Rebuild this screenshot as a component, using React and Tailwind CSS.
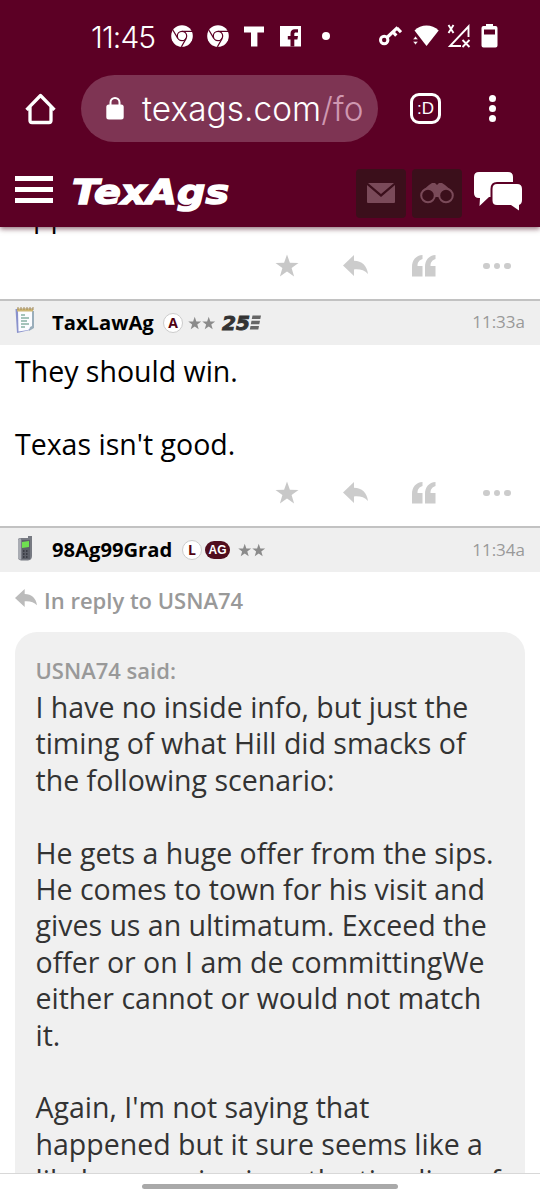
const STAR = "M12 0.5l2.9 8.2 8.6.2-6.9 5.2 2.5 8.4-7.1-4.9-7.1 4.9 2.5-8.4L.5 8.9l8.6-.2z";

function Chrome({ className }) {
  return (
    <svg className={className} width="22" height="22" viewBox="0 0 22 22">
      <circle cx="11" cy="11" r="10.8" fill="#fff" />
      <g fill="none" stroke="#5c0025" strokeWidth="1.2">
        <circle cx="11" cy="11" r="4.700" />
        <path d="M11 6.300H21M6.800 13.400L2 5.200M15.200 13.400L10.400 21.800" />
      </g>
    </svg>
  );
}

function StatusBar() {
  return (
    <div className="flex h-[72px] shrink-0 items-center pl-[91px]">
      <span className="w-[80px] whitespace-nowrap pt-[1px] font-['Inter'] text-[30px] font-light leading-none tracking-[-0.900px]">11:45</span>
      <Chrome />
      <Chrome className="ml-[14px]" />
      <svg className="ml-[15px]" width="20" height="21" viewBox="0 0 20 21" fill="#fff">
        <path d="M0 .5h20v6h-6.600v14H7v-14H0z" />
      </svg>
      <svg className="ml-[16px]" width="21" height="21" viewBox="0 0 21 21">
        <path fill="#fff" d="M0 0h21v20.500H0z" />
        <path fill="#5c0025" d="M10.500 20.500v-7H7.800V10h2.700V7.800c0-3 1.500-4.500 4.300-4.500H18v3.200h-2c-1.300 0-1.700.5-1.700 1.500v2H18l-.6 3.500h-3.100v7z" />
      </svg>
      <span className="ml-[21px] h-2 w-2 rounded-full bg-white" />
      <svg className="ml-[49px]" width="23" height="22" viewBox="0 0 23 22" fill="none" stroke="#fff">
        <circle cx="5.200" cy="15" r="3.700" strokeWidth="3" />
        <path d="M8 12.500L18.700 2.300M14 7l3.300 3.600M18 3.200l4 4" strokeWidth="3.200" />
      </svg>
      <svg className="ml-[11px]" width="27" height="22" viewBox="0 0 27 22" fill="#fff">
        <path d="M1.500 5.500C8-1.200 19-1.200 25.700 5.500L13.500 21z" />
        <path d="M0 14.500l2.500-3.200L5 14.500zM0 16.500h5l-2.500 3.200z" stroke="#5c0025" strokeWidth=".4" />
      </svg>
      <svg className="ml-[7px]" width="24" height="24" viewBox="0 0 24 24" fill="none" stroke="#fff" strokeWidth="1.900">
        <path d="M21.500 13V2.500L3 22h11M1.500 1l5 8M6.500 1l-5 8M15.500 16l7 7M22.500 16l-7 7" />
      </svg>
      <svg className="ml-[10px]" width="17" height="24" viewBox="0 0 17 24">
        <path fill="#fff" d="M5 0h7v2h2.500q2 0 2 2v17.500q0 2-2 2h-12q-2 0-2-2V4q0-2 2-2H5z" />
        <path fill="#5c0025" d="M3 5.500h11v5H3z" />
      </svg>
    </div>
  );
}

function BrowserBar() {
  return (
    <div className="flex h-[73px] shrink-0 items-center pl-[25px]">
      <svg width="32" height="32" viewBox="0 0 32 32" fill="none" stroke="#fff" strokeWidth="3.300" strokeLinejoin="round">
        <path d="M1.500 16.800L15.500 2.500L29.500 16.800M5 14v13.500q0 2 2 2h17q2 0 2-2V14" />
      </svg>
      <div className="ml-[24px] flex h-[67px] w-[297px] items-center rounded-full bg-[#7e3453] pl-[25px]">
        <svg width="18" height="23" viewBox="0 0 18 23">
          <path d="M4.500 9V5.500a4.500 4.500 0 0 1 9 0V9" fill="none" stroke="#fff" strokeWidth="2" />
          <rect x=".3" y="7.500" width="17.400" height="15" rx="2.500" fill="#fff" />
        </svg>
        <span className="ml-[18px] whitespace-nowrap pt-[3px] font-['Inter'] text-[33.300px] font-light leading-none tracking-[0.100px]">
          texags.com<span className="text-[#cf97b0]">/fo</span>
        </span>
      </div>
      <span className="ml-[32px] flex h-[31px] w-[31px] items-center justify-center rounded-[9px] border-[3px] border-white font-['Liberation_Sans'] text-[17px] leading-none">:D</span>
      <div className="ml-[48px] flex flex-col gap-[3px]">
        <i className="h-[7px] w-[7px] rounded-full bg-white" />
        <i className="h-[7px] w-[7px] rounded-full bg-white" />
        <i className="h-[7px] w-[7px] rounded-full bg-white" />
      </div>
    </div>
  );
}

function SiteBar() {
  return (
    <div className="flex h-[82px] shrink-0 items-center pl-[15px] pt-[14px]">
      <div className="-mt-[7px] flex w-[38px] flex-col gap-[6px]">
        <i className="h-[5px] bg-white" />
        <i className="h-[5px] bg-white" />
        <i className="h-[5px] bg-white" />
      </div>
      <svg className="ml-[19px]" width="160" height="44" viewBox="0 0 160 44">
        <text x="0" y="33" textLength="157" lengthAdjust="spacingAndGlyphs" fill="#fff" stroke="#fff" strokeWidth="1.500" fontFamily="DejaVu Sans" fontWeight="700" fontStyle="italic" fontSize="34.500">TexAgs</text>
      </svg>
      <span className="ml-[124px] flex h-[49px] w-[50px] items-center justify-center rounded-[4px] bg-[#3b0f1b]">
        <svg width="28" height="20" viewBox="0 0 28 20" fill="#7a4a59">
          <path d="M1 0h26L14 11zM0 2l14 12L28 2v17q0 1-1 1H1q-1 0-1-1z" />
        </svg>
      </span>
      <span className="ml-[6px] flex h-[49px] w-[50px] items-center justify-center rounded-[4px] bg-[#3b0f1b]">
        <svg width="34" height="22" viewBox="0 0 34 22">
          <path fill="#7a4a59" d="M2 9L9 3l3-2h3l2 2 2-2h3l3 2 7 6-6 0-5 3-2 3h-4l-2-3-5-3z" />
          <g fill="#3b0f1b" stroke="#7a4a59" strokeWidth="2">
            <circle cx="8" cy="13.500" r="6.800" />
            <circle cx="26" cy="13.500" r="6.800" />
          </g>
        </svg>
      </span>
      <svg className="-mt-[3px] ml-[12px]" width="48" height="39" viewBox="0 0 48 39">
        <path fill="#fff" d="M5 0h29q5 0 5 5v20H15l-9.500 9 .5-8H5q-5 0-5-5V5q0-5 5-5z" />
        <path fill="#fff" stroke="#5c0025" strokeWidth="4" paintOrder="stroke" d="M23 12h20q5 0 5 5v11q0 4-3 5v5.500L37 33H23q-4.500 0-4.500-4.500V17q0-5 4.500-5z" />
      </svg>
    </div>
  );
}

function Reply({ className, width = 25, height = 21, fill = "#ccc" }) {
  return (
    <svg className={className} width={width} height={height} viewBox="0 0 25 21" fill={fill} preserveAspectRatio="none">
      <path d="M0 10.500L11 0v5.700c8 0 13 5 14 13.300-3.500-4-8-5-14-4.600V21z" />
    </svg>
  );
}

function Actions() {
  return (
    <div className="flex h-6 shrink-0 items-center pl-[275px]">
      <svg width="24" height="24" viewBox="0 0 24 24" fill="#c8c8c8"><path d={STAR} /></svg>
      <Reply className="ml-[44px]" />
      <svg className="ml-[44px]" width="24" height="22" viewBox="0 0 24 22" fill="#ccc">
        <path d="M10.500 0v4C7.500 5 5.500 7 5.500 11h5v10.500H0V12C0 5 4 .5 10.500 0zM23.500 0v4c-3 1-5 3-5 7h5v10.500H13V12C13 5 17 .5 23.500 0z" />
      </svg>
      <div className="ml-[47px] flex gap-1">
        <i className="h-[6.500px] w-[6.500px] rounded-full bg-[#ccc]" />
        <i className="h-[6.500px] w-[6.500px] rounded-full bg-[#ccc]" />
        <i className="h-[6.500px] w-[6.500px] rounded-full bg-[#ccc]" />
      </div>
    </div>
  );
}

function Stars({ className }) {
  return (
    <svg className={className} width="28" height="14" viewBox="0 0 52 26" fill="#8b8b8b">
      <path d={STAR} transform="translate(0 1) scale(1.040)" />
      <path d={STAR} transform="translate(26 1) scale(1.040)" />
    </svg>
  );
}

function Initial({ children }) {
  return (
    <span className="flex h-5 w-5 shrink-0 items-center justify-center rounded-full border border-[#ccc] bg-white font-['Open_Sans'] text-[14px] font-bold leading-none text-[#500010]">
      {children}
    </span>
  );
}

function Notepad() {
  return (
    <svg className="-mt-1" width="20" height="27" viewBox="0 0 20 27">
      <path d="M.5 2L18 1.500 19 20l-4 3L2 26z" fill="#8a92cc" />
      <path d="M3 4L17 3v17l-4 3-9.500 1.500z" fill="#fbfcff" />
      <path d="M17 4h2v17l-5 3 1-4 2-1z" fill="#9aaebb" />
      <path d="M2 1.500h16V4.500H2z" fill="#cdb674" />
      <path d="M3 0v3M6 0v3M9 0v3M12 0v3M15 0v3M18 0v3" stroke="#a38a58" strokeWidth="1" />
      <path d="M6 8h4M6 11h8M6 14h6M6 17h8M6 20h4" stroke="#88b0a4" strokeWidth="1.300" />
    </svg>
  );
}

function Phone() {
  return (
    <svg className="-mt-[4px]" width="16" height="25" viewBox="0 0 16 25">
      <path d="M3 2h8V0q2-.5 4 0v20q0 4-4 4.500H4Q1 24 1 21V4q0-2 2-2z" fill="#777a82" />
      <path d="M1 4l2-2 1 1v20l-1 1-2-2z" fill="#a9acb3" />
      <path d="M5 4h8v19H5z" fill="#5c5f68" />
      <path d="M5 6l7-1v6l-7 1z" fill="#6fe050" />
      <path d="M6 15h1.500M9 15h1.500M6 18h1.500M9 18h1.500M6 21h1.500M9 21h1.500" stroke="#30333a" strokeWidth="1.500" />
    </svg>
  );
}

function PostHeader({ children, time }) {
  return (
    <div className="flex h-[46px] shrink-0 items-center border-t-2 border-[#c2c2c2] bg-[#efefef] pl-[15px] pr-[15px]">
      {children}
      <span className="ml-auto pb-[2px] text-[17px] leading-none text-[#999]">{time}</span>
    </div>
  );
}

export default function App() {
  return (
    <main className="flex h-[1200px] w-[540px] flex-col overflow-hidden bg-white font-['Open_Sans',sans-serif] text-black">
      <header className="relative z-10 flex h-[227px] shrink-0 flex-col bg-[#5c0025] text-white shadow-[0_2px_5px_rgba(60,0,20,0.55)]">
        <StatusBar />
        <BrowserBar />
        <SiteBar />
      </header>

      <p className="-mt-[29px] h-[36.400px] shrink-0 pl-[15px] text-[28.500px] leading-[36.400px]">App</p>
      <div className="h-[19.600px] shrink-0" />
      <Actions />
      <div className="h-[21px] shrink-0" />

      <PostHeader time="11:33a">
        <Notepad />
        <span className="ml-[17px] w-[111px] whitespace-nowrap pb-[2px] text-[20.200px] font-bold leading-none">TaxLawAg</span>
        <Initial>A</Initial>
        <Stars className="ml-[5px]" />
        <svg className="ml-[6px] overflow-visible" width="40" height="24" viewBox="0 0 40 24">
          <text x="0" y="19" textLength="28" lengthAdjust="spacingAndGlyphs" fontFamily="DejaVu Sans" fontStyle="italic" fontWeight="700" fontSize="19.500" fill="#333" stroke="#333" strokeWidth=".9">25</text>
          <path d="M30.500 4.500h8.500l-.7 3.500h-8.500zM29.500 9.700H38l-.7 3.500h-8.500zM28.500 15H37l-.7 3.500h-8.500z" fill="#666" />
        </svg>
      </PostHeader>
      <div className="h-[136px] shrink-0 pl-[15px] pt-[8.500px] text-[28.500px] leading-[36.400px]">
        <p>They should win.</p>
        <p className="mt-[36.400px]">Texas isn't good.</p>
      </div>
      <Actions />
      <div className="h-[21.500px] shrink-0" />

      <PostHeader time="11:34a">
        <span className="w-[37px] pl-[2px]"><Phone /></span>
        <span className="w-[130px] whitespace-nowrap pb-[2px] text-[20.200px] font-bold leading-none">98Ag99Grad</span>
        <Initial>L</Initial>
        <span className="ml-[3px] flex h-[18px] w-[25px] items-center justify-center rounded-full bg-[#500d1d] font-['Liberation_Sans'] text-[12px] font-bold leading-none text-white">AG</span>
        <Stars className="ml-[8px]" />
      </PostHeader>
      <div className="flex h-[59.500px] shrink-0 items-center pb-[4px] pl-[15px]">
        <Reply width={22} height={18} fill="#bbb" className="-mt-[5px]" />
        <span className="ml-[7px] whitespace-nowrap text-[22px] font-semibold leading-none text-[#999]">In reply to USNA74</span>
      </div>

      <blockquote className="ml-[15px] h-[541px] w-[510px] shrink-0 overflow-hidden rounded-t-[22px] bg-[#f0f0f0] pl-[20.500px] pt-[22px] text-[#333]">
        <p className="h-[35px] text-[22px] font-semibold leading-[32px] text-[#999]">USNA74 said:</p>
        <div className="whitespace-nowrap text-[28.500px] leading-[36.400px]">
          <p>I have no inside info, but just the<br />timing of what Hill did smacks of<br />the following scenario:</p>
          <p className="mt-[36.400px]">He gets a huge offer from the sips.<br />He comes to town for his visit and<br />gives us an ultimatum. Exceed the<br />offer or on I am de committingWe<br />either cannot or would not match<br />it.</p>
          <p className="mt-[36.400px]">Again, I'm not saying that<br />happened but it sure seems like a<br />likely scenario given the timeline of</p>
        </div>
      </blockquote>
      <footer className="flex h-[27px] shrink-0 justify-center border-t border-[#d8d8d8] bg-white pt-[10px]">
        <i className="h-[5px] w-[256px] rounded-full bg-[#a9a9a9]" />
      </footer>
    </main>
  );
}
